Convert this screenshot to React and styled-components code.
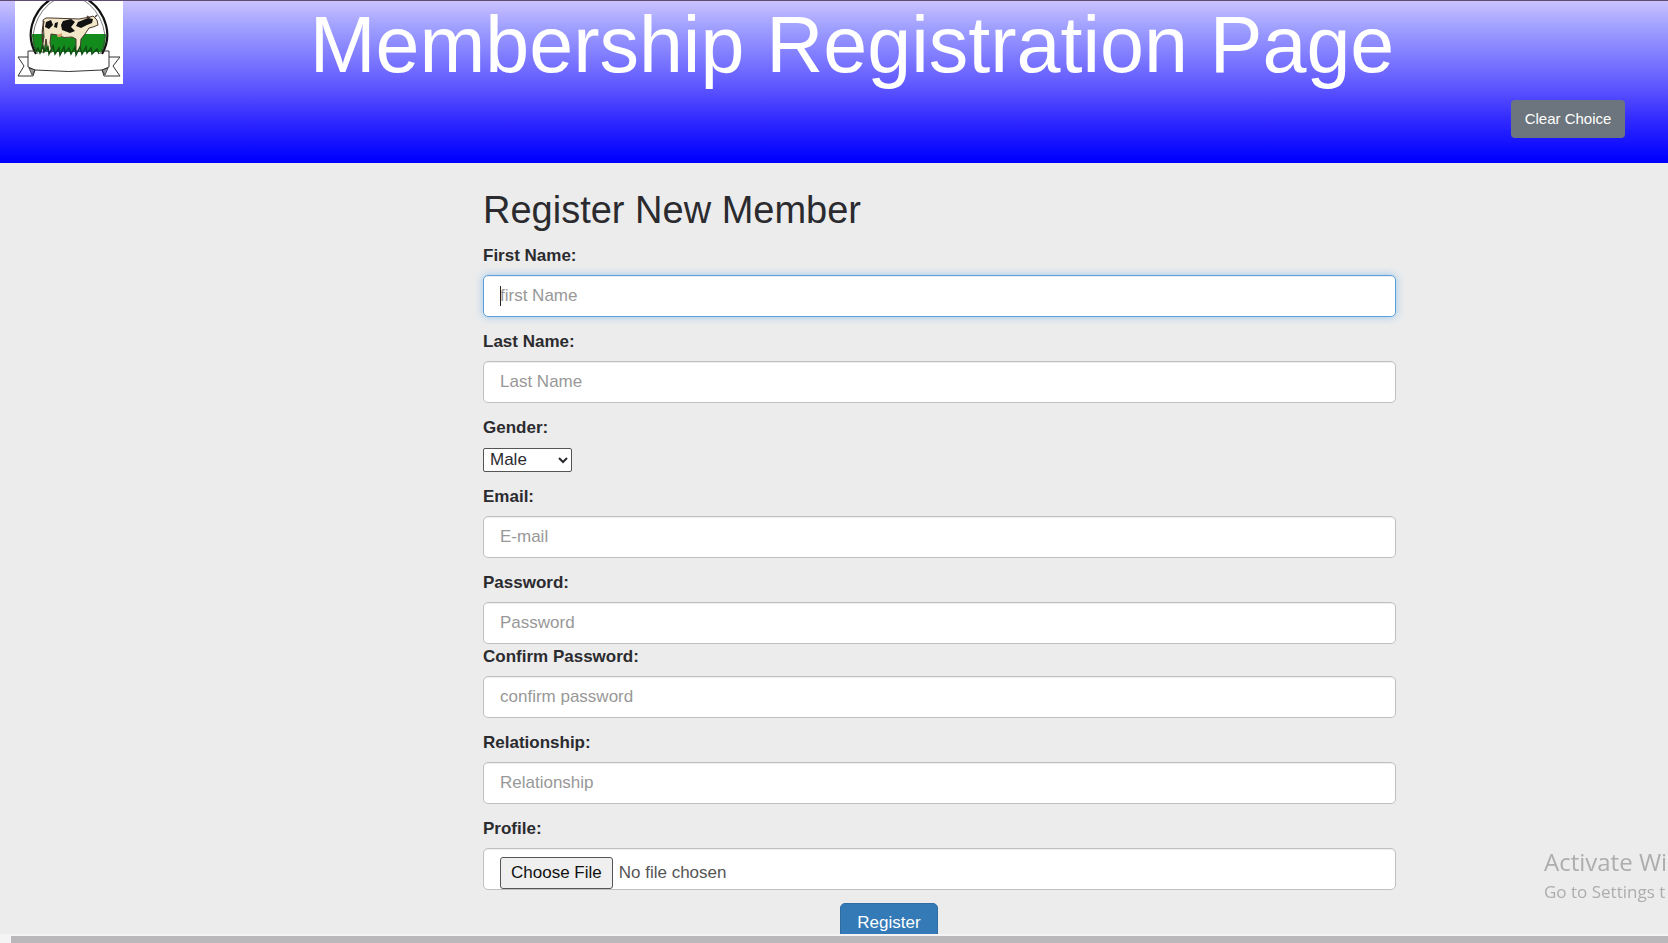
import React from "react";
import styled, { createGlobalStyle, css } from "styled-components";

const GlobalStyle = createGlobalStyle`
  *, *::before, *::after { box-sizing: border-box; }
  html, body, #root { height: 100%; }
  body {
    margin: 0;
    background: #ececec;
    color: #2b2b2f;
    font-family: "Liberation Sans", Arial, sans-serif;
    font-size: 17px;
    line-height: 26px;
    overflow: hidden;
  }
`;

const Page = styled.div`
  display: flex;
  flex-direction: column;
  height: 100vh;
  overflow: hidden;
`;

const Viewport = styled.div`
  flex: 1;
  min-height: 0;
  overflow: hidden;
`;

const Header = styled.header`
  display: flex;
  flex-direction: column;
  height: 163px;
  border-top: 1px solid #5f4c74;
  background: linear-gradient(#cac2ff 0%, #a0a0ff 16%, #6058ff 52%, #3029ff 74%, #0000ff 98%);
`;

const Brand = styled.div`
  display: flex;
  align-items: flex-start;
  height: 99px;
  padding: 0 87px 0 15px;
`;

const Logo = styled.svg`
  flex: none;
  display: block;
  width: 108px;
  height: 83px;
  background: #fff;
`;

const Title = styled.h1`
  flex: 1;
  margin: 0;
  color: #fff;
  font-size: 79px;
  font-weight: 400;
  line-height: 88px;
  text-align: center;
  white-space: nowrap;
`;

const Toolbar = styled.div`
  display: flex;
  justify-content: flex-end;
  padding-right: 43px;
`;

const Button = styled.button`
  padding: 0 0 2px;
  border: 0;
  border-radius: 4px;
  color: #fff;
  font-family: inherit;
  cursor: pointer;
  ${({ $primary }) =>
    $primary
      ? css`
          width: 98px;
          height: 42px;
          background: #337ab7;
          border: 1px solid #2e6da4;
          border-radius: 5px;
          font-size: 17px;
        `
      : css`
          width: 114px;
          height: 38px;
          background: #6c757d;
          font-size: 15px;
        `}
`;

const Main = styled.main`
  display: grid;
  grid-template-columns: 483fr 913fr 272fr;
`;

const Form = styled.form`
  grid-column: 2;
  padding-top: 25px;
`;

const Heading = styled.h2`
  margin: 0 0 11px;
  font-size: 38px;
  font-weight: 400;
  line-height: 44px;
`;

const Group = styled.div`
  display: flex;
  flex-direction: column;
  align-items: flex-start;
  gap: 6px;
  margin-bottom: ${({ $tight }) => ($tight ? 0 : 12)}px;
`;

const Label = styled.label`
  font-weight: 700;
`;

const Control = styled.div`
  position: relative;
  width: 100%;
`;

const focusRing = css`
  border-color: #5aa0dc;
  box-shadow: inset 0 1px 1px rgba(0, 0, 0, 0.075), 0 0 8px rgba(102, 175, 233, 0.6);
`;

const Input = styled.input`
  display: block;
  width: 100%;
  height: 42px;
  padding: 6px 16px;
  border: 1px solid #c2bfc4;
  border-radius: 5px;
  outline: 0;
  background: #fff;
  box-shadow: inset 0 1px 1px rgba(0, 0, 0, 0.075);
  color: #555;
  font-family: inherit;
  font-size: 17px;
  &::placeholder { color: #989898; opacity: 1; }
  &:focus { ${focusRing} }
  ${({ $active }) => $active && focusRing}
`;

const FileInput = styled(Input)`
  padding: 8px 16px 0;
  &::file-selector-button {
    height: 32px;
    margin: 0 6px 0 0;
    padding: 0 10px;
    border: 1px solid #555;
    border-radius: 3px;
    background: #efefef;
    color: #111;
    font-family: inherit;
    font-size: 17px;
  }
`;

const Caret = styled.span`
  position: absolute;
  top: 11px;
  left: 17px;
  width: 1px;
  height: 20px;
  background: #222;
`;

const Select = styled.select`
  width: 89px;
  height: 24px;
  margin-top: 1px;
  padding: 0 2px 1px;
  border: 1px solid #555;
  border-radius: 2px;
  background: #fff;
  color: #2b2b2f;
  font-family: inherit;
  font-size: 17px;
`;

const Actions = styled.div`
  display: flex;
  justify-content: center;
  padding: 1px 101px 0 0;
`;

const ScrollTrack = styled.div`
  flex: none;
  padding: 2px 0 0 11px;
  background: #f4f4f4;
`;

const ScrollThumb = styled.div`
  height: 7px;
  background: #bab8ba;
`;

const Watermark = styled.aside`
  position: fixed;
  left: calc(100% - 124px);
  bottom: 38px;
  color: #adadad;
  font-family: "Open Sans", "Noto Sans", sans-serif;
  white-space: nowrap;
  pointer-events: none;
`;

const WatermarkTitle = styled.div`
  font-size: 24px;
  line-height: 34px;
`;

const WatermarkText = styled.div`
  font-size: 17px;
  line-height: 26px;
`;

function CowLogo() {
  return (
    <Logo viewBox="0 0 108 83" role="img" aria-label="Cow logo">
      <clipPath id="badge"><circle cx="54" cy="35" r="37" /></clipPath>
      <rect x="12" y="33" width="84" height="18" fill="#128a1c" clipPath="url(#badge)" />
      <path d="M21 53A38 38 0 0 1 17 24Q22 6 38 -3M70 -3Q86 6 91 24A38 38 0 0 1 87 53" fill="none" stroke="#111" strokeWidth="2.2" />
      <path d="M23 53A35 35 0 0 1 20 25Q25 8 41 -2M67 -2Q83 8 88 25A35 35 0 0 1 85 53" fill="none" stroke="#444" strokeWidth=".7" />
      <path d="M28 19Q30 16 36 17L64 18L75 16L78 15L82 19L83 24L78 26L74 27L70 33L66 38L65 50H61L61 38L57 36Q49 38 42 34L36 33L35 42L37 51H33L31 38L29 51H26L29 36Z" fill="#f2e8c9" stroke="#49362d" strokeWidth="1" />
      <path d="M31 21L36 19L38 24L34 28L30 26ZM40 22L43 21L42 27L39 26ZM48 20L56 18L60 21L56 26L60 30L55 32L47 29L46 24ZM63 21L73 17L78 18L77 22L72 24L66 27L61 25Z" fill="#111" />
      <path d="M42 34Q42 38 47 35L47 32Z" fill="#d6a070" />
      <path d="M29 20Q26 32 28 42M75 17L72 15M80 16L82 14" fill="none" stroke="#49362d" strokeWidth="1.3" />
      <path d="M20 51l3-4 2 5 3-7 1 6 4-5 1 7 4-8 2 8 4-6 1 7 4-8 1 6 4-5 2 6 4-7 1 8 4-8 2 7 4-7 1 6 4-5 1 6 5-5 2 5" fill="none" stroke="#104d16" strokeWidth="1.5" />
      <path d="M20 50H13V56H3L9 65L3 75H18L20 69M88 50H94V56H105L98 65L105 75H89L87 69M13 56V66L20 69M94 56V66L87 69M20 69Q54 72 87 69" fill="none" stroke="#333" strokeWidth="1" />
      <path d="M14 67L20 69L17 74ZM93 67L87 69L90 74Z" fill="#999" stroke="#222" strokeWidth=".7" />
    </Logo>
  );
}

function TextField({ id, label, type = "text", placeholder, tight, active }) {
  return (
    <Group $tight={tight}>
      <Label htmlFor={id}>{label}</Label>
      <Control>
        <Input id={id} name={id} type={type} placeholder={placeholder} $active={active} />
        {active && <Caret />}
      </Control>
    </Group>
  );
}

export default function App() {
  return (
    <Page>
      <GlobalStyle />
      <Viewport>
        <Header>
          <Brand>
            <CowLogo />
            <Title>Membership Registration Page</Title>
          </Brand>
          <Toolbar>
            <Button type="reset" form="register">Clear Choice</Button>
          </Toolbar>
        </Header>
        <Main>
          <Form id="register" onSubmit={(e) => e.preventDefault()}>
            <Heading>Register New Member</Heading>
            <TextField id="first" label="First Name:" placeholder="first Name" active />
            <TextField id="last" label="Last Name:" placeholder="Last Name" />
            <Group>
              <Label htmlFor="gender">Gender:</Label>
              <Select id="gender" name="gender">
                <option>Male</option>
              </Select>
            </Group>
            <TextField id="email" type="email" label="Email:" placeholder="E-mail" />
            <TextField id="password" type="password" label="Password:" placeholder="Password" tight />
            <TextField id="confirm" type="password" label="Confirm Password:" placeholder="confirm password" />
            <TextField id="relationship" label="Relationship:" placeholder="Relationship" />
            <Group>
              <Label htmlFor="profile">Profile:</Label>
              <FileInput id="profile" name="profile" type="file" />
            </Group>
            <Actions>
              <Button type="submit" $primary>Register</Button>
            </Actions>
          </Form>
        </Main>
      </Viewport>
      <ScrollTrack>
        <ScrollThumb />
      </ScrollTrack>
      <Watermark>
        <WatermarkTitle>Activate Wi</WatermarkTitle>
        <WatermarkText>Go to Settings t</WatermarkText>
      </Watermark>
    </Page>
  );
}
